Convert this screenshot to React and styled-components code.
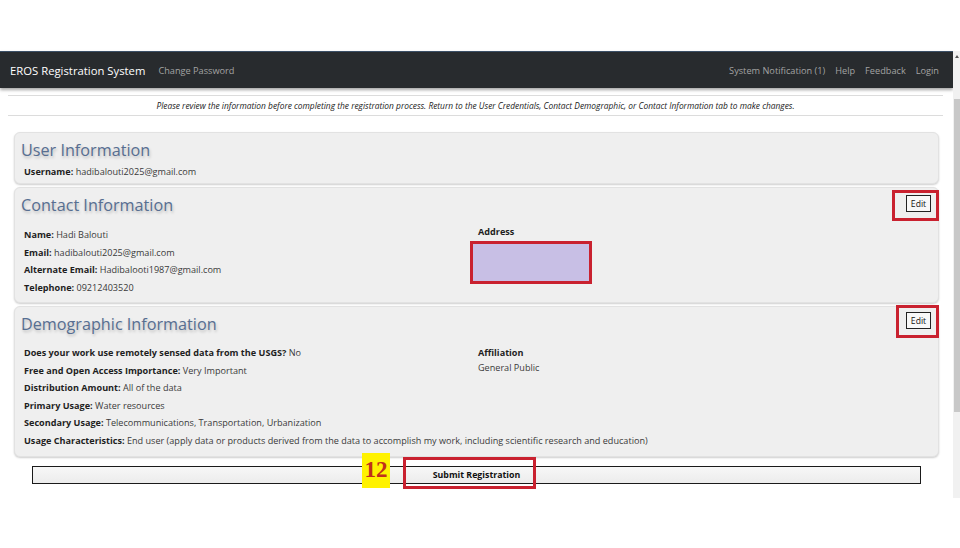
import React from 'react'
import styled, { createGlobalStyle } from 'styled-components'

const Global = createGlobalStyle`
  html, body { margin: 0; padding: 0; background: #fff; }
  body { font-family: "Open Sans", "Liberation Sans", sans-serif; color: #333; }
`

const Page = styled.div`
  padding-top: 51px;
  width: 960px;
`

const Frame = styled.div`
  display: flex;
  align-items: stretch;
`

const Main = styled.div`
  flex: 1;
  padding-bottom: 14px;
`

const Scrollbar = styled.div`
  width: 7px;
  background: #f1f1f1;
  display: flex;
  flex-direction: column;
  align-items: center;
`

const ScrollArrow = styled.div`
  width: 0;
  height: 0;
  margin-top: 4px;
  border-left: 2px solid transparent;
  border-right: 2px solid transparent;
  border-bottom: 3px solid #555;
`

const Thumb = styled.div`
  width: 6px;
  height: 313px;
  margin-top: 41px;
  background: #c8c8c8;
`

const Navbar = styled.nav`
  height: 36px;
  background: #282b2e;
  border-top: 1px solid #3b4f66;
  box-shadow: 0 2px 3px rgba(0, 0, 0, 0.35);
  display: flex;
  align-items: center;
  padding: 0 14px 0 10px;
`

const Brand = styled.span`
  color: #fff;
  font-size: 11.3px;
  margin-right: 13px;
`

const NavLink = styled.span`
  color: #a3a3a3;
  font-size: 9.2px;
  margin-left: ${p => p.gap || 0}px;
`

const Spacer = styled.div`
  flex: 1;
`

const Notice = styled.div`
  margin: 7px 10px 0 8px;
  height: 19px;
  border-top: 1px solid #dcdcdc;
  border-bottom: 1px solid #dcdcdc;
  display: flex;
  align-items: center;
  justify-content: center;
  font-size: 8.4px;
  font-style: italic;
  color: #222;
`

const Panels = styled.div`
  margin: 16px 14px 0 14px;
  display: flex;
  flex-direction: column;
  gap: 3px;
`

const Panel = styled.section`
  position: relative;
  background: #efefef;
  border: 1px solid #e2e2e2;
  border-radius: 6px;
  box-shadow: 0 1px 2px rgba(0, 0, 0, 0.2);
  height: ${p => p.h}px;
  box-sizing: border-box;
  padding: 6px 0 0 6px;
`

const Title = styled.h2`
  margin: 0;
  font-size: 16.2px;
  font-weight: 500;
  color: #576e91;
  text-shadow: 1px 2px 3px rgba(0, 0, 0, 0.22);
  line-height: 22px;
`

const Body = styled.div`
  display: grid;
  grid-template-columns: 454px 1fr;
  padding-left: 3px;
  margin-top: ${p => p.top || 0}px;
`

const Col = styled.div`
  display: flex;
  flex-direction: column;
`

const Row = styled.div`
  font-size: 9.1px;
  line-height: 17.6px;
  color: #3a3a3a;
  white-space: nowrap;
`

const Label = styled.b`
  color: #1e1e1e;
  font-weight: 700;
`

const ColHead = styled.div`
  font-size: 9.1px;
  font-weight: 700;
  color: #1e1e1e;
  line-height: 15px;
  margin-top: ${p => p.top || 0}px;
`

const ColValue = styled.div`
  font-size: 9.1px;
  line-height: 15px;
  color: #3a3a3a;
`

const AddressBox = styled.div`
  margin-left: -8px;
  margin-top: 2px;
  width: 116px;
  height: 37px;
  background: #c8bfe5;
  border: 3px solid #c9212f;
`

const EditMark = styled.div`
  position: absolute;
  right: -1px;
  top: ${p => p.top}px;
  width: ${p => p.w}px;
  height: ${p => p.h}px;
  box-sizing: border-box;
  border: 3px solid #c9212f;
  display: flex;
  justify-content: flex-end;
  align-items: flex-start;
  padding: ${p => p.pad};
`

const EditButton = styled.button`
  width: 25px;
  height: 17px;
  padding: 0;
  background: #f8f8f8;
  border: 1.5px solid #222;
  font-family: "Open Sans", "Liberation Sans", sans-serif;
  font-size: 8.6px;
  line-height: 14px;
  color: #111;
`

const SubmitRow = styled.div`
  position: relative;
  margin: 9px 32px 0 32px;
`

const SubmitBar = styled.button`
  display: block;
  width: 100%;
  height: 18px;
  padding: 0;
  background: linear-gradient(#f7f7f7, #ececec);
  border: 1.5px solid #1a1a1a;
  font-family: "Open Sans", "Liberation Sans", sans-serif;
  font-size: 8.8px;
  font-weight: 700;
  color: #111;
`

const SubmitMark = styled.div`
  position: absolute;
  left: 371px;
  top: -9px;
  width: 133px;
  height: 32px;
  box-sizing: border-box;
  border: 3px solid #c9212f;
`

const StepBadge = styled.div`
  position: absolute;
  left: 330px;
  top: -13px;
  width: 28px;
  height: 35px;
  background: #fff200;
  color: #c0301c;
  font-family: "Liberation Serif", serif;
  font-weight: 700;
  font-size: 23px;
  line-height: 33px;
  text-align: center;
`

export default function App() {
  return (
    <Page>
      <Global />
      <Frame>
        <Main>
          <Navbar>
            <Brand>EROS Registration System</Brand>
            <NavLink>Change Password</NavLink>
            <Spacer />
            <NavLink>System Notification (1)</NavLink>
            <NavLink gap={10}>Help</NavLink>
            <NavLink gap={10}>Feedback</NavLink>
            <NavLink gap={10}>Login</NavLink>
          </Navbar>
          <Notice>
            Please review the information before completing the registration process. Return to the User Credentials, Contact Demographic, or Contact Information tab to make changes.
          </Notice>
          <Panels>
            <Panel h={52}>
              <Title>User Information</Title>
              <Body top={2}>
                <Col>
                  <Row><Label>Username:</Label> hadibalouti2025@gmail.com</Row>
                </Col>
              </Body>
            </Panel>
            <Panel h={116}>
              <Title>Contact Information</Title>
              <EditMark top={2} w={47} h={31} pad="2px 5px 0 0">
                <EditButton>Edit</EditButton>
              </EditMark>
              <Body top={10}>
                <Col>
                  <Row><Label>Name:</Label> Hadi Balouti</Row>
                  <Row><Label>Email:</Label> hadibalouti2025@gmail.com</Row>
                  <Row><Label>Alternate Email:</Label> Hadibalooti1987@gmail.com</Row>
                  <Row><Label>Telephone:</Label> 09212403520</Row>
                </Col>
                <Col>
                  <ColHead top={-2}>Address</ColHead>
                  <AddressBox />
                </Col>
              </Body>
            </Panel>
            <Panel h={151}>
              <Title>Demographic Information</Title>
              <EditMark top={-2} w={43} h={33} pad="4px 5px 0 0">
                <EditButton>Edit</EditButton>
              </EditMark>
              <Body top={9}>
                <Col>
                  <Row><Label>Does your work use remotely sensed data from the USGS?</Label> No</Row>
                  <Row><Label>Free and Open Access Importance:</Label> Very Important</Row>
                  <Row><Label>Distribution Amount:</Label> All of the data</Row>
                  <Row><Label>Primary Usage:</Label> Water resources</Row>
                  <Row><Label>Secondary Usage:</Label> Telecommunications, Transportation, Urbanization</Row>
                  <Row><Label>Usage Characteristics:</Label> End user (apply data or products derived from the data to accomplish my work, including scientific research and education)</Row>
                </Col>
                <Col>
                  <ColHead top={1}>Affiliation</ColHead>
                  <ColValue>General Public</ColValue>
                </Col>
              </Body>
            </Panel>
          </Panels>
          <SubmitRow>
            <SubmitBar>Submit Registration</SubmitBar>
            <StepBadge>12</StepBadge>
            <SubmitMark />
          </SubmitRow>
        </Main>
        <Scrollbar>
          <ScrollArrow />
          <Thumb />
        </Scrollbar>
      </Frame>
    </Page>
  )
}
